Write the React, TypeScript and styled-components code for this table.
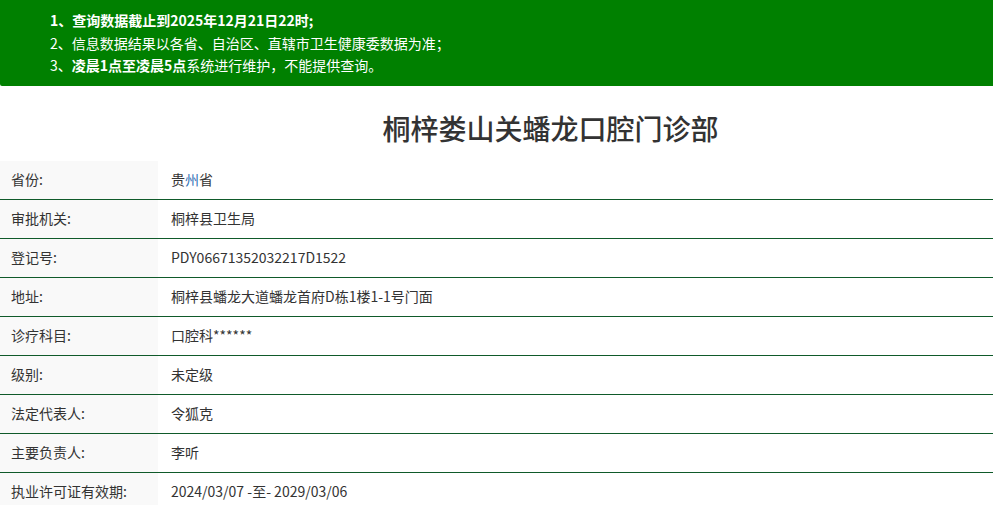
import React from "react";
import styled, { createGlobalStyle } from "styled-components";

const Global = createGlobalStyle`
  html, body { margin: 0; padding: 0; background: #fff; }
  body {
    font-family: "Noto Sans CJK SC", "Open Sans", "Noto Sans", sans-serif;
    color: #333;
  }
`;

const Notice = styled.div`
  background: #008000;
  height: 86px;
  box-sizing: border-box;
  padding: 9px 0 0 50px;
  color: #fff;
  font-size: 14px;
  line-height: 22.5px;
  border-bottom-left-radius: 2px;
`;

const NoticeLine = styled.div<{ $bold?: boolean }>`
  font-weight: ${(p) => (p.$bold ? 700 : 400)};
  white-space: nowrap;
`;

const Strong = styled.b`
  font-weight: 700;
`;

const Title = styled.h1`
  margin: 22px 0 13px;
  padding-left: 108px;
  text-align: center;
  font-size: 28px;
  line-height: 40px;
  font-weight: 500;
  color: #333;
`;

const Table = styled.div`
  display: grid;
  grid-template-columns: 158px 1fr;
`;

const Row = styled.div`
  display: contents;
`;

const Label = styled.div<{ $last?: boolean }>`
  background: #f9f9f9;
  height: 36px;
  padding: 0 0 2px 11px;
  display: flex;
  align-items: center;
  font-size: 14px;
  border-bottom: ${(p) => (p.$last ? "none" : "1px solid #0f5a2a")};
`;

const Value = styled.div<{ $last?: boolean }>`
  height: 36px;
  padding: 0 0 2px 13px;
  display: flex;
  align-items: center;
  font-size: 14px;
  border-bottom: ${(p) => (p.$last ? "none" : "1px solid #0f5a2a")};
`;

const Hl = styled.span`
  color: #2f6fb5;
`;

const rows: [string, React.ReactNode][] = [
  ["省份:", <>贵<Hl>州</Hl>省</>],
  ["审批机关:", "桐梓县卫生局"],
  ["登记号:", "PDY06671352032217D1522"],
  ["地址:", "桐梓县蟠龙大道蟠龙首府D栋1楼1-1号门面"],
  ["诊疗科目:", "口腔科******"],
  ["级别:", "未定级"],
  ["法定代表人:", "令狐克"],
  ["主要负责人:", "李听"],
  ["执业许可证有效期:", "2024/03/07 -至- 2029/03/06"],
];

export default function App() {
  return (
    <>
      <Global />
      <Notice>
        <NoticeLine $bold>1、查询数据截止到2025年12月21日22时;</NoticeLine>
        <NoticeLine>2、信息数据结果以各省、自治区、直辖市卫生健康委数据为准；</NoticeLine>
        <NoticeLine>
          3、<Strong>凌晨1点至凌晨5点</Strong>系统进行维护，不能提供查询。
        </NoticeLine>
      </Notice>
      <Title>桐梓娄山关蟠龙口腔门诊部</Title>
      <Table>
        {rows.map(([k, v], i) => (
          <Row key={k}>
            <Label $last={i === rows.length - 1}>{k}</Label>
            <Value $last={i === rows.length - 1}>{v}</Value>
          </Row>
        ))}
      </Table>
    </>
  );
}
